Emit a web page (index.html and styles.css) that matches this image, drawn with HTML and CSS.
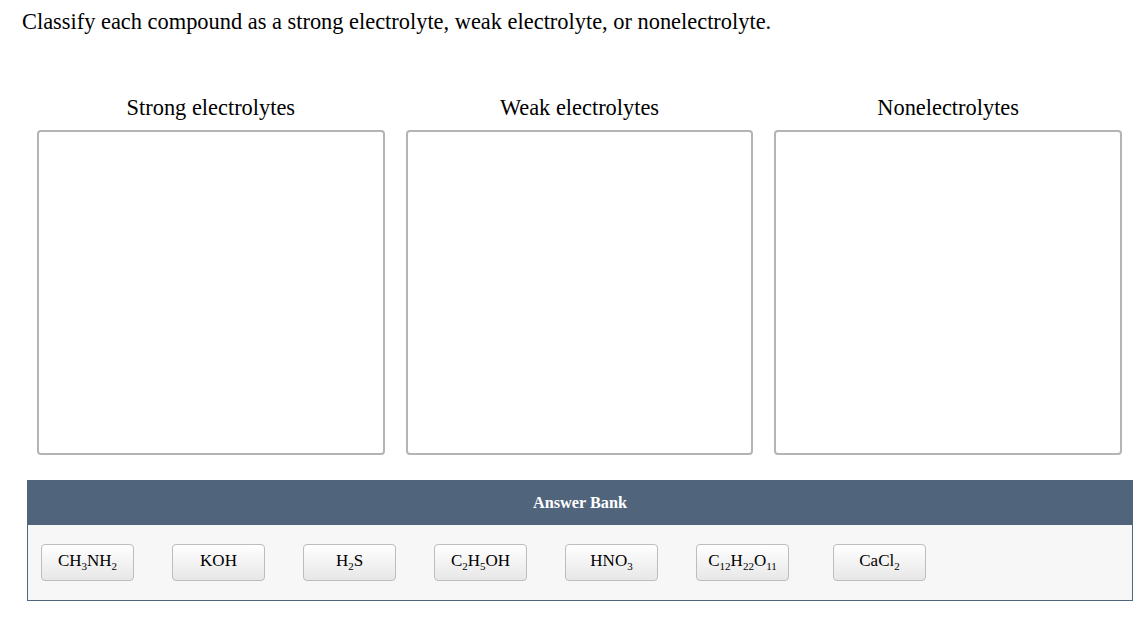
FILE: index.html
```html
<!DOCTYPE html>
<html>
<head>
<meta charset="utf-8">
<link rel="stylesheet" href="styles.css">
</head>
<body>
<div class="page">
  <p class="prompt">Classify each compound as a strong electrolyte, weak electrolyte, or nonelectrolyte.</p>
  <div class="bins">
    <div class="bin">
      <div class="bin-title">Strong electrolytes</div>
      <div class="bin-box"></div>
    </div>
    <div class="bin">
      <div class="bin-title">Weak electrolytes</div>
      <div class="bin-box"></div>
    </div>
    <div class="bin">
      <div class="bin-title">Nonelectrolytes</div>
      <div class="bin-box"></div>
    </div>
  </div>
  <div class="bank">
    <div class="bank-head">Answer Bank</div>
    <div class="bank-body">
      <div class="chip">CH<sub>3</sub>NH<sub>2</sub></div>
      <div class="chip">KOH</div>
      <div class="chip">H<sub>2</sub>S</div>
      <div class="chip">C<sub>2</sub>H<sub>5</sub>OH</div>
      <div class="chip">HNO<sub>3</sub></div>
      <div class="chip">C<sub>12</sub>H<sub>22</sub>O<sub>11</sub></div>
      <div class="chip chip-last">CaCl<sub>2</sub></div>
    </div>
  </div>
</div>
</body>
</html>
```
FILE: styles.css
```css
html, body {
  margin: 0;
  padding: 0;
  background: #ffffff;
}
body {
  font-family: "Liberation Serif", "Times New Roman", serif;
  color: #000;
}
.page {
  padding: 9px 4px 0 22px;
}
.prompt {
  margin: 0;
  font-size: 22.4px;
  line-height: 26px;
}
.bins {
  display: grid;
  grid-template-columns: repeat(3, 1fr);
  column-gap: 21px;
  width: 1085px;
  margin: 60px 0 0 15px;
}
.bin {
  display: flex;
  flex-direction: column;
}
.bin-title {
  font-size: 22.4px;
  line-height: 26px;
  text-align: center;
  height: 26px;
}
.bin-box {
  margin-top: 9px;
  height: 321px;
  border: 2px solid #b4b4b4;
  border-radius: 4px;
  background: #fff;
}
.bank {
  width: 1106px;
  margin: 25px 0 0 5px;
  border: 1px solid #50647c;
  box-sizing: border-box;
}
.bank-head {
  background: #50647c;
  color: #fff;
  font-weight: bold;
  font-size: 16.3px;
  height: 44px;
  display: flex;
  align-items: center;
  justify-content: center;
}
.bank-body {
  background: #f7f7f7;
  display: flex;
  gap: 38px;
  padding: 19px 13px 19px 13px;
}
.chip {
  width: 93px;
  height: 37px;
  box-sizing: border-box;
  border: 1px solid #bdbdbd;
  border-radius: 4px;
  background: linear-gradient(#ffffff, #e7e7e7);
  font-size: 17px;
  line-height: 20px;
  padding-top: 6px;
  text-align: center;
}
.chip-last {
  margin-left: 6px;
}
.chip sub {
  font-size: 11px;
  line-height: 0;
  vertical-align: -4px;
}
```
